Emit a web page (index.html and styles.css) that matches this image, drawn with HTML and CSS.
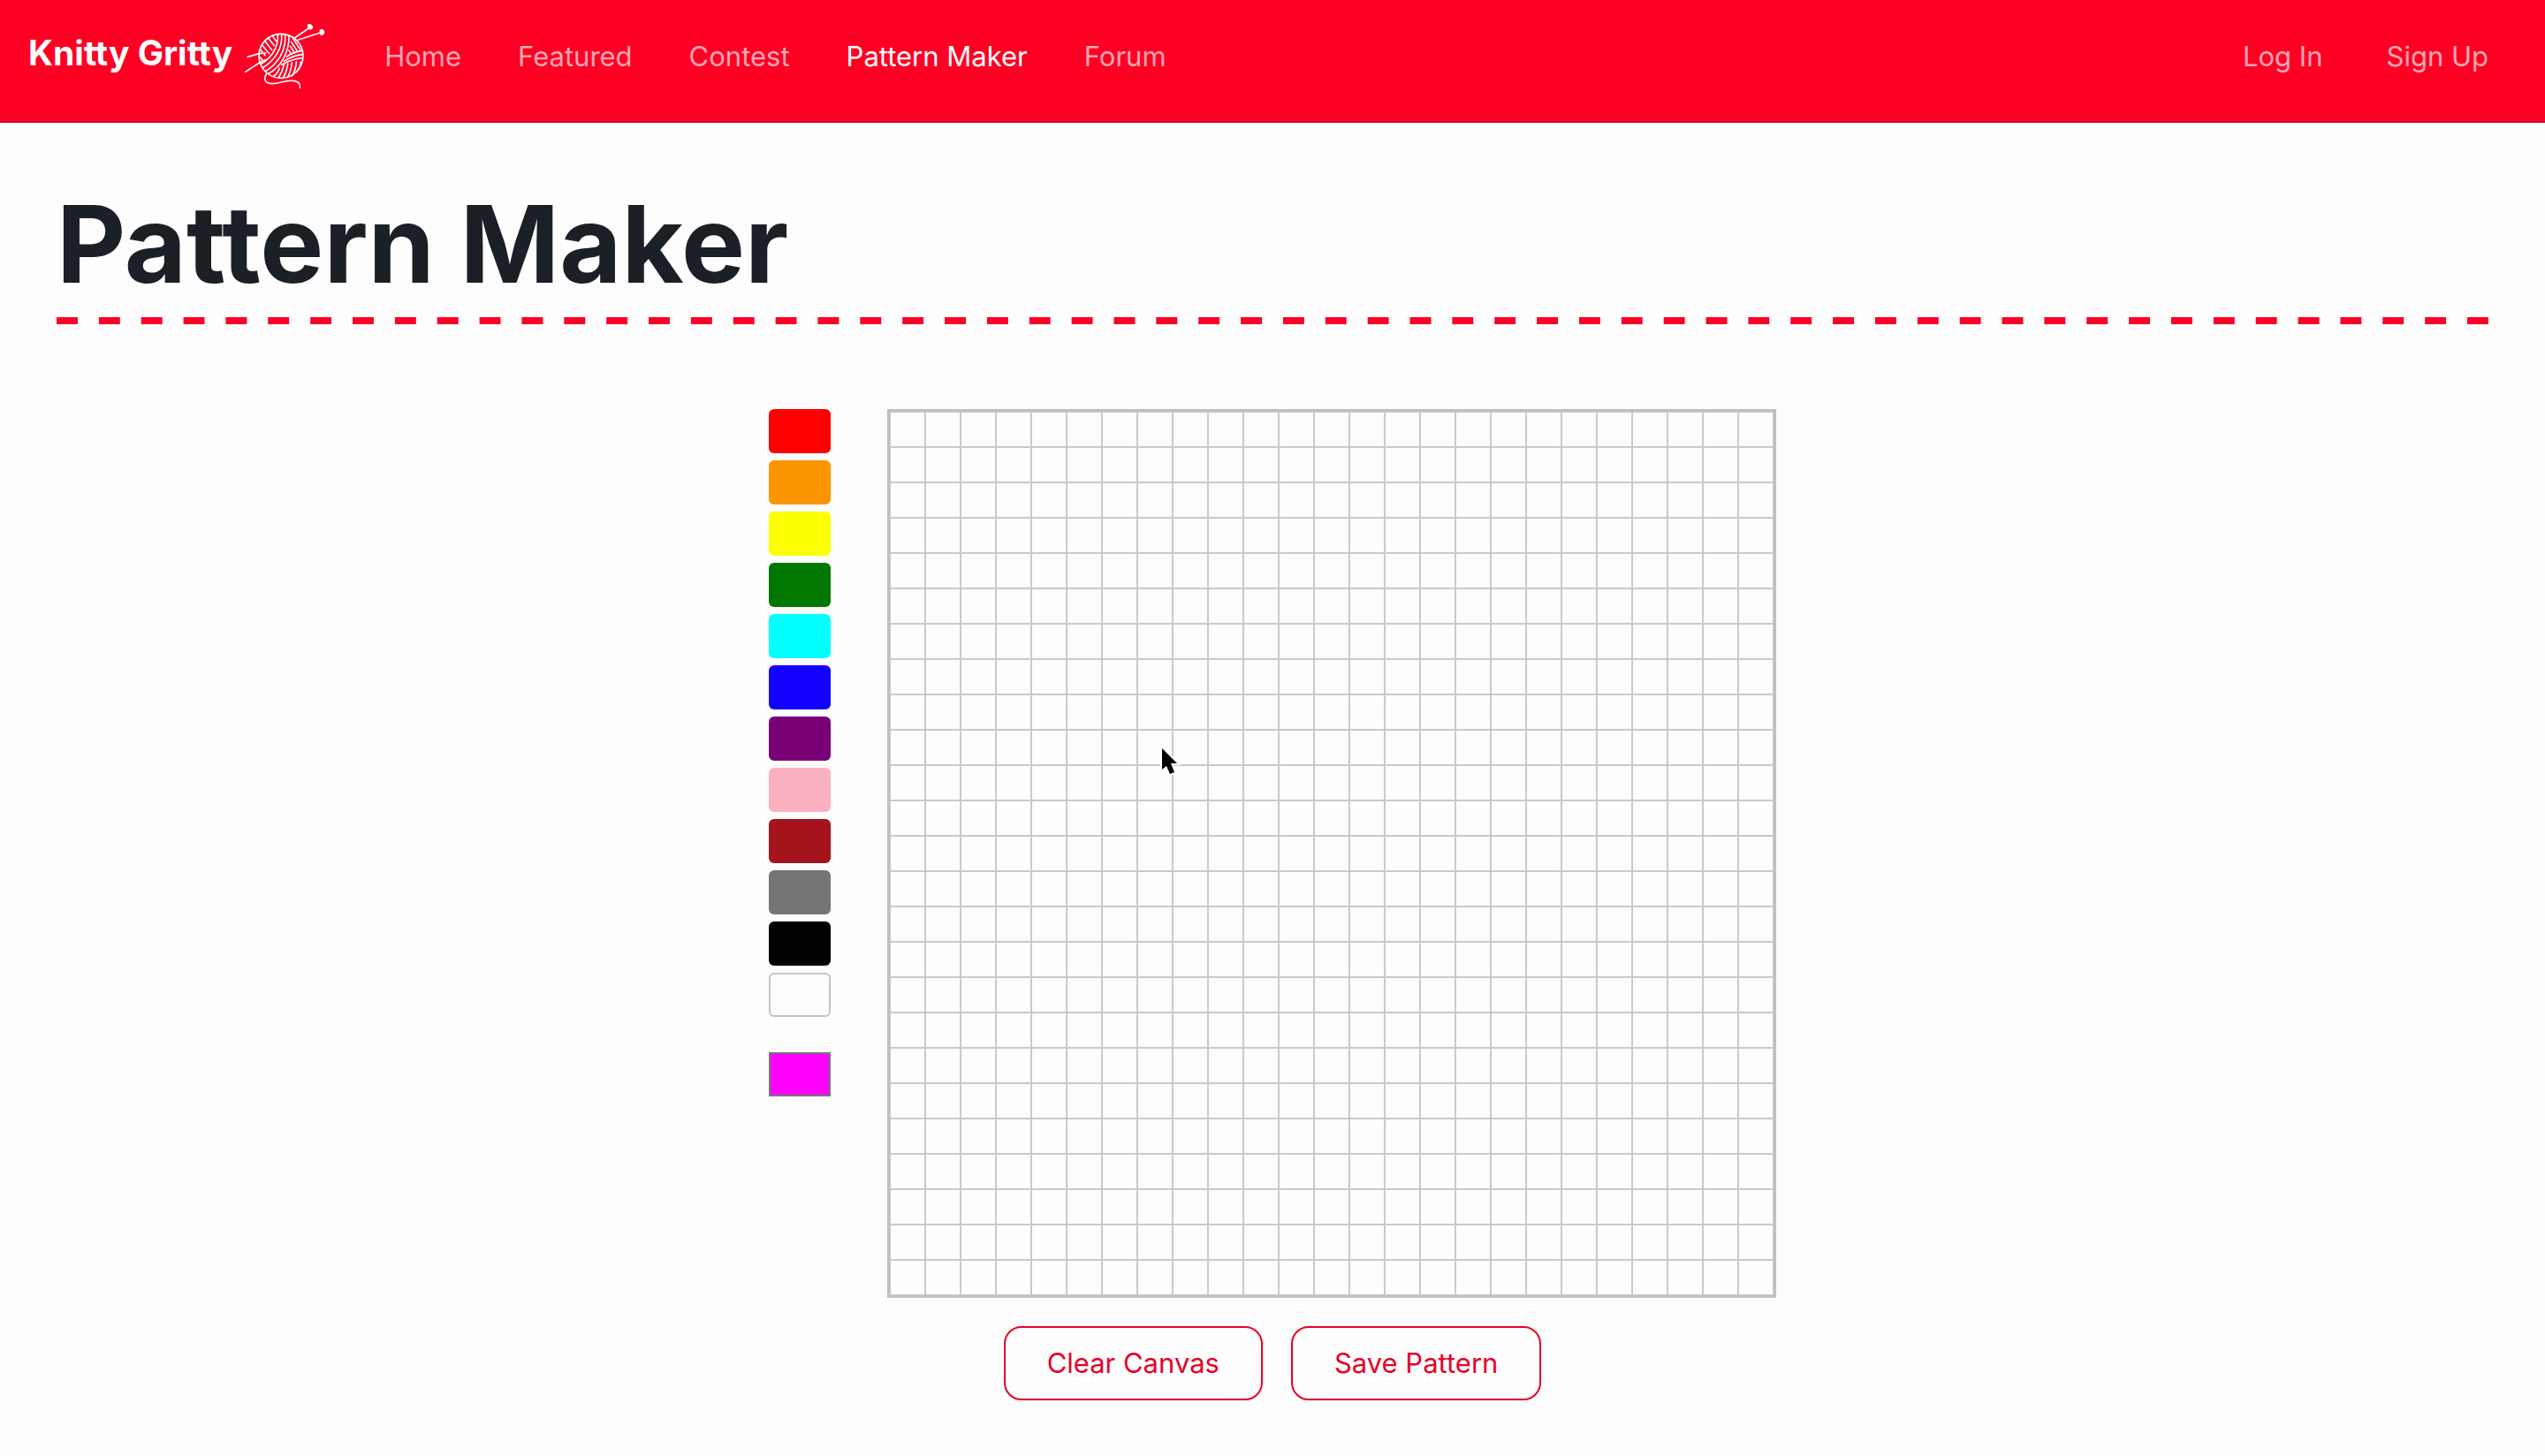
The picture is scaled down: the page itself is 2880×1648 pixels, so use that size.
FILE: index.html
```html
<!DOCTYPE html>
<html lang="en">
<head>
<meta charset="utf-8">
<meta name="viewport" content="width=device-width, initial-scale=1">
<title>Pattern Maker | Knitty Gritty</title>
<link rel="stylesheet" href="styles.css">
</head>
<body>
<header class="navbar">
  <a class="brand" href="#">
    <span>Knitty Gritty</span>
    <svg class="brand-icon" viewBox="39 42 288 234" aria-hidden="true">
      <g fill="none" stroke="currentColor" stroke-width="5" stroke-linecap="round" stroke-linejoin="round">
        <circle cx="174" cy="160" r="75"/>
        <path d="M61 163L99 152L122 150M53 214L101 183L126 172M220 99L268 66M233 105L308 81"/>
        <path d="M124 222C113 240 121 253 144 254C172 254 190 241 214 244C234 246 240 255 238 268"/>
        <path d="M163 87C165 126 147 162 106 188M176 86C180 135 153 175 112 200M188 87C193 140 163 187 121 212M201 91C203 145 175 196 132 220"/>
        <path d="M145 92L158 110M131 99L151 125M119 109L143 140M109 122L134 152M103 137L120 158M101 163L112 175"/>
        <path d="M213 98L240 139M209 112L230 145M206 127L220 150M201 141L209 155"/>
        <path d="M246 142C222 146 204 153 193 163M248 154C224 158 200 167 184 178M247 167C222 168 198 178 176 190"/>
        <path d="M241 180C240 194 234 205 227 214M226 180C225 201 219 216 211 228M211 183C209 205 204 219 196 233M197 187C195 207 189 221 181 235M184 190C180 208 174 221 166 233M169 201C165 213 159 222 150 228"/>
      </g>
      <g fill="currentColor">
        <path d="M263 55Q270 48 276 53Q286 60 281 67Q274 74 268 69Q262 62 263 55Z"/>
        <path d="M305 72Q312 66 318 71Q325 79 318 88Q309 93 306 86Q303 80 305 72Z"/>
      </g>
    </svg>
  </a>
  <nav class="nav-links" aria-label="Main">
    <a href="#">Home</a>
    <a href="#">Featured</a>
    <a href="#">Contest</a>
    <a class="active" href="#" aria-current="page">Pattern Maker</a>
    <a href="#">Forum</a>
  </nav>
  <nav class="account-links" aria-label="Account">
    <a href="#">Log In</a>
    <a href="#">Sign Up</a>
  </nav>
</header>
<main class="page">
  <h1 class="title">Pattern Maker</h1>
  <div class="stitch"></div>
  <section class="workspace" aria-label="Pattern editor">
    <div class="palette">
      <button class="swatch red" type="button" aria-label="Red"></button>
      <button class="swatch orange" type="button" aria-label="Orange"></button>
      <button class="swatch yellow" type="button" aria-label="Yellow"></button>
      <button class="swatch green" type="button" aria-label="Green"></button>
      <button class="swatch cyan" type="button" aria-label="Cyan"></button>
      <button class="swatch blue" type="button" aria-label="Blue"></button>
      <button class="swatch purple" type="button" aria-label="Purple"></button>
      <button class="swatch pink" type="button" aria-label="Pink"></button>
      <button class="swatch brown" type="button" aria-label="Brown"></button>
      <button class="swatch gray" type="button" aria-label="Gray"></button>
      <button class="swatch black" type="button" aria-label="Black"></button>
      <button class="swatch white" type="button" aria-label="White"></button>
      <input class="picker" type="color" value="#ff00ff" aria-label="Custom color">
    </div>
    <div class="board">
      <svg class="pointer" viewBox="0 0 24 36" aria-hidden="true">
        <path d="M3 2V26L8 22L12 31L17 29L13 19H20Z" fill="#000" stroke="#fff" stroke-width="4" paint-order="stroke"/>
      </svg>
    </div>
  </section>
  <div class="actions">
    <button class="action" type="button">Clear Canvas</button>
    <button class="action" type="button">Save Pattern</button>
  </div>
</main>
</body>
</html>
```
FILE: styles.css
```css
* { box-sizing: border-box; }

body {
  margin: 0;
  background: #fdfdfd;
  color: #1b1f26;
  font-family: Inter, "Liberation Sans", sans-serif;
  font-size: 32px;
}

.navbar {
  display: flex;
  align-items: flex-start;
  padding: 24px 64px 34px 32px;
  border-bottom: 1px solid #a01020;
  background: #fe0024;
}

.navbar a { text-decoration: none; }

.brand {
  display: flex;
  gap: 10px;
  margin-right: 66px;
  color: #fff;
  font-size: 39px;
  font-weight: 700;
  line-height: 72px;
}

.brand-icon { width: 96px; height: 78px; }

.nav-links, .account-links {
  display: flex;
  gap: 64px;
  font-size: 31px;
  line-height: 80px;
}

.account-links { gap: 72px; margin-left: auto; }

.nav-links a, .account-links a { color: #ffa6b3; }

.nav-links .active { color: #fff; }

.page { padding: 78px 64px 60px; }

.title {
  margin: 0;
  font-size: 121px;
  font-weight: 700;
  line-height: 118px;
}

.stitch {
  height: 8px;
  margin: 24px 0 96px;
  overflow: hidden;
}

/* The extra half period makes the row end on a full stitch. */
.stitch::before {
  content: "";
  display: block;
  width: calc(100% + 24px);
  height: 8px;
  background: linear-gradient(to right, #fc0028 50%, transparent 50%) 0 0 / 48px 8px round;
}

.workspace {
  display: flex;
  justify-content: center;
  gap: 64px;
}

.palette {
  display: flex;
  flex-direction: column;
  gap: 8px;
}

.swatch, .picker {
  width: 70px;
  height: 50px;
  padding: 0;
  border: 0;
  border-radius: 6px;
}

.red { background: #ff0000; }
.orange { background: #fb9600; }
.yellow { background: #fbff00; }
.green { background: #007800; }
.cyan { background: #00ffff; }
.blue { background: #1400ff; }
.purple { background: #7a0078; }
.pink { background: #fbb0c0; }
.brown { background: #a5141c; }
.gray { background: #757575; }
.black { background: #000; }
.white { border: 2px solid #c4c4c8; background: #fdfdfd; }

.picker {
  margin-top: 32px;
  border: 2px solid #777;
  border-radius: 0;
  background: none;
  appearance: none;
}

.picker::-webkit-color-swatch-wrapper { padding: 0; }
.picker::-webkit-color-swatch { border: 0; border-radius: 0; }

.board {
  position: relative;
  width: 1006px;
  height: 1006px;
  border: 3px solid #bfbfc4;
  background:
    linear-gradient(to right, #c9c9cf 1px, transparent 1px 39px, #c9c9cf 39px) 0 0 / 40px 40px,
    linear-gradient(#c9c9cf 1px, transparent 1px 39px, #c9c9cf 39px) 0 0 / 40px 40px;
}

.pointer {
  position: absolute;
  left: 305px;
  top: 379px;
  width: 24px;
  height: 36px;
}

.actions {
  display: flex;
  justify-content: center;
  gap: 32px;
  margin-top: 32px;
}

.action {
  padding: 16px 47px;
  border: 2px solid #e60028;
  border-radius: 20px;
  background: none;
  color: #e60028;
  font-family: inherit;
  font-size: 31px;
  line-height: 48px;
}
```
